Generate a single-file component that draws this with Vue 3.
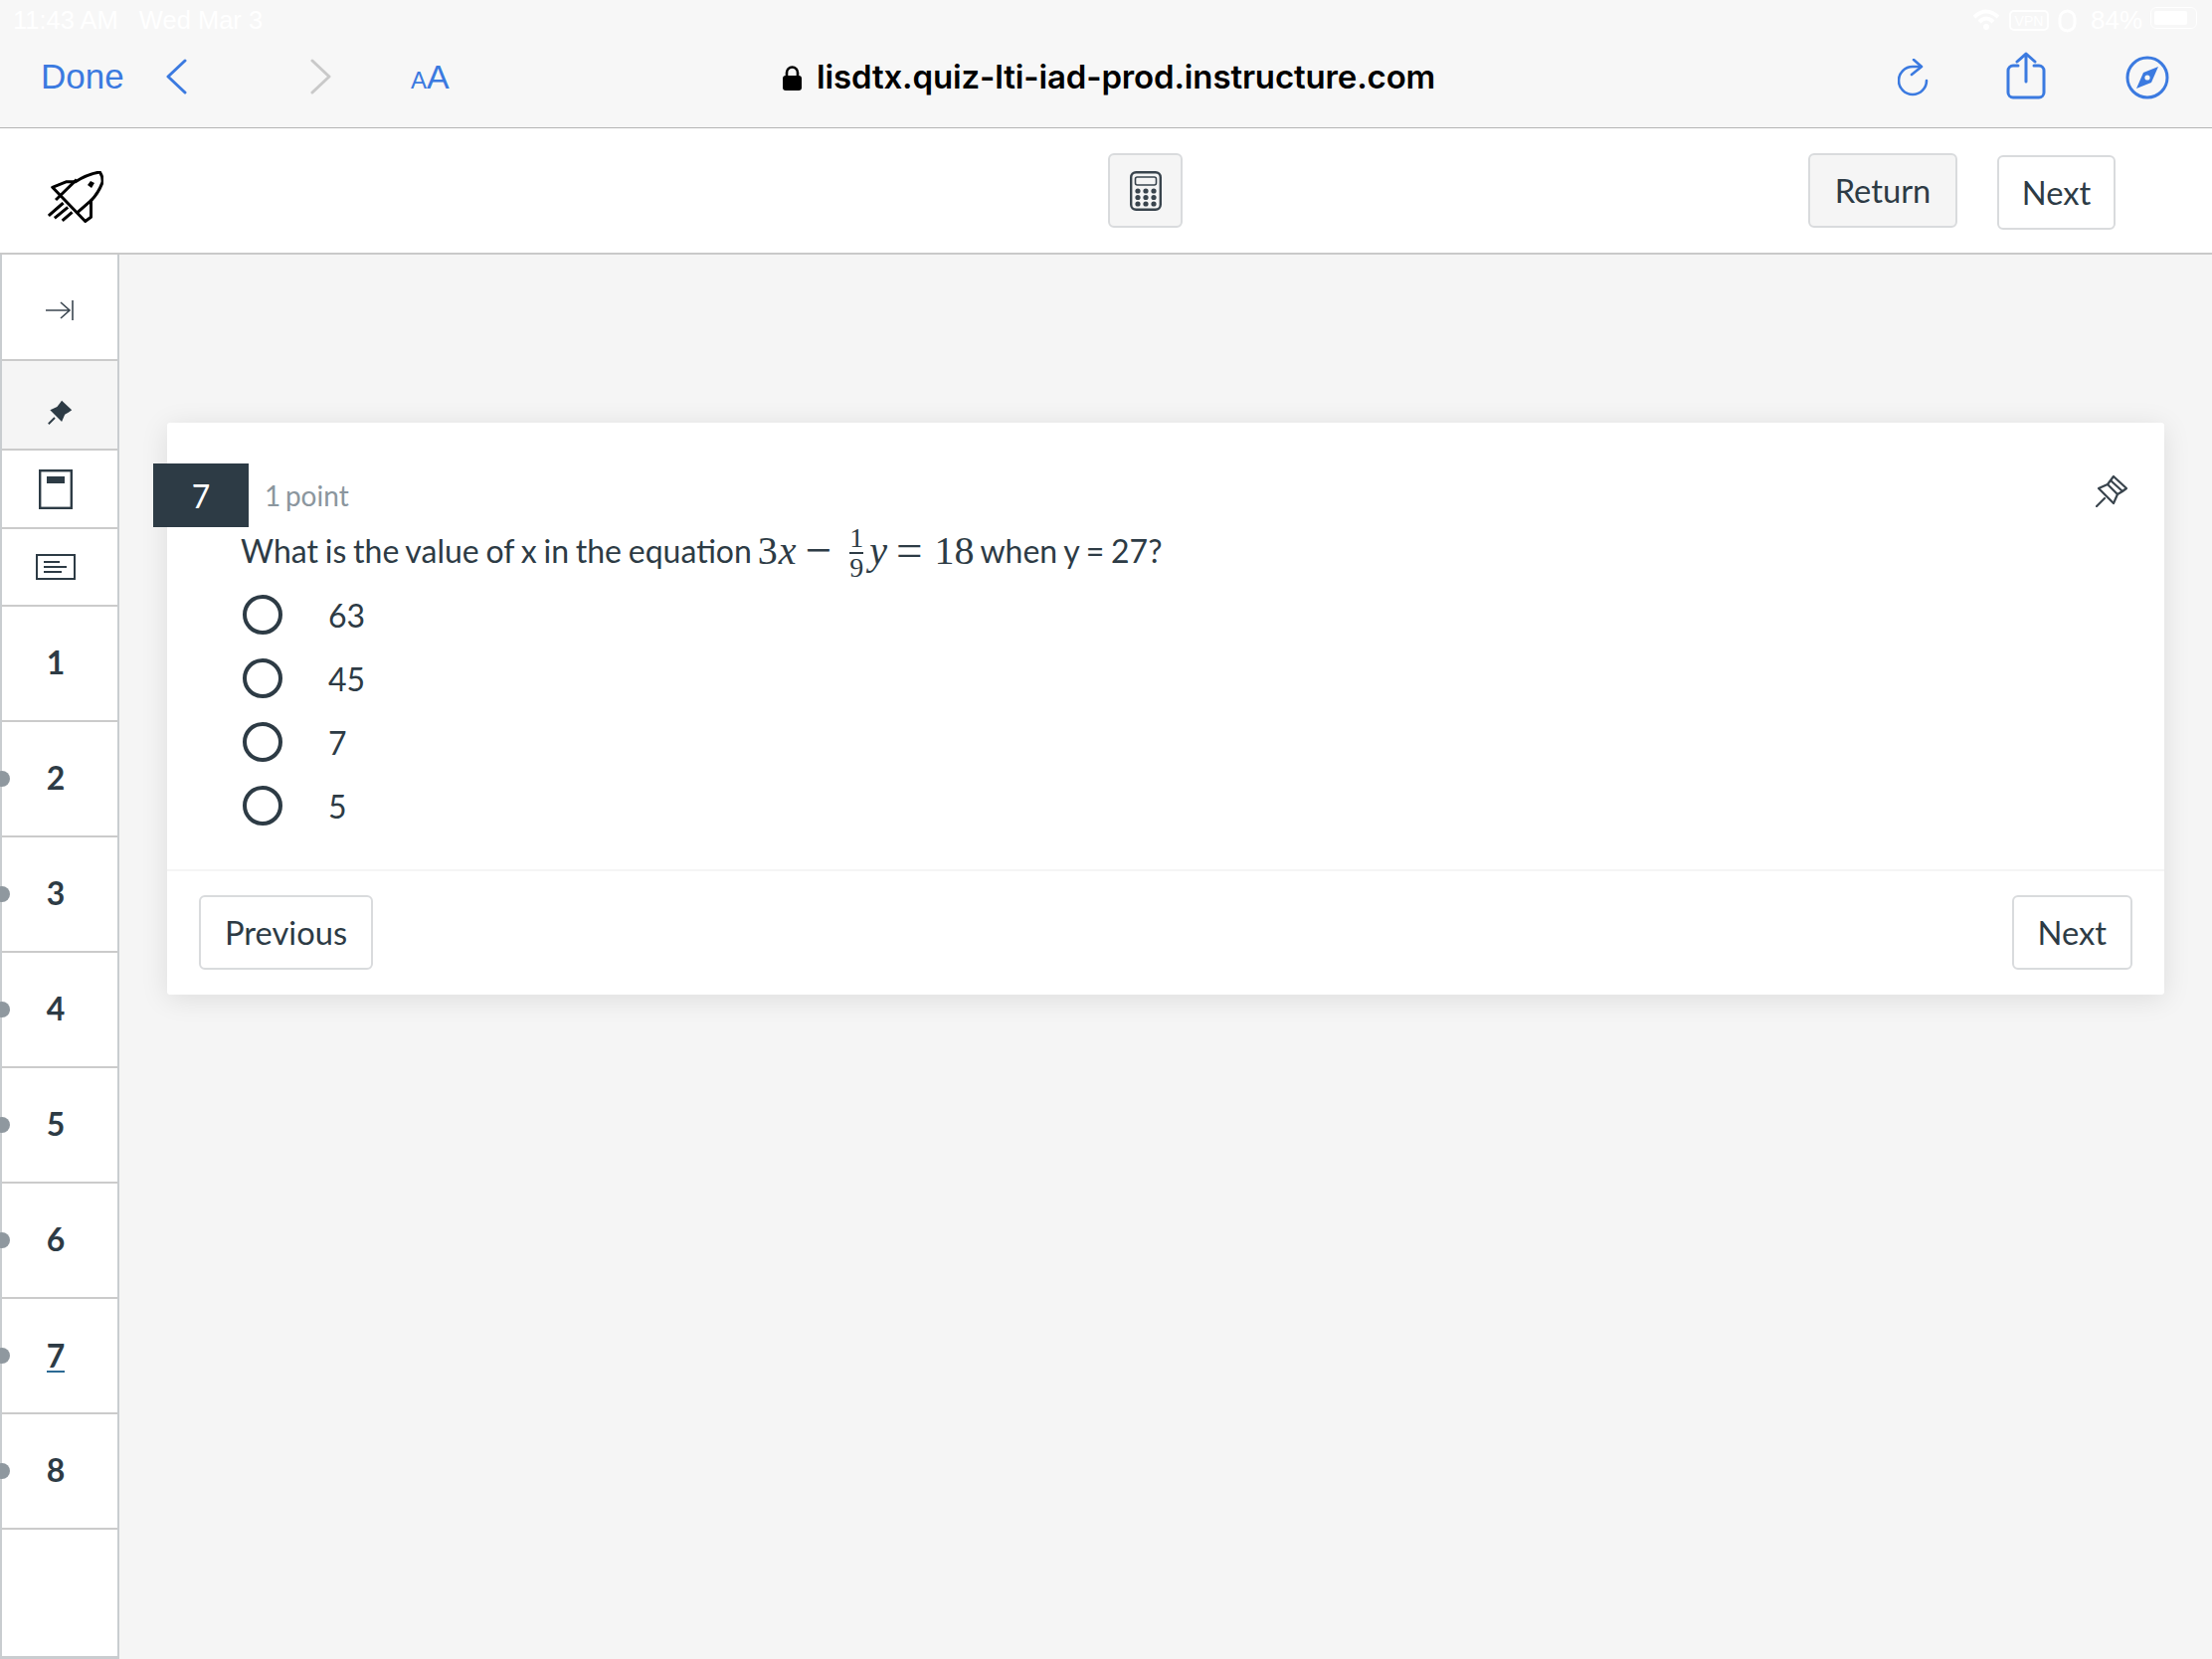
<script setup>
const questions = [1, 2, 3, 4, 5, 6, 7, 8]
const answers = ['63', '45', '7', '5']
const pinPath = 'M18 1 L31 13 L27 16 L22 19 L18 28 L3 13 L12 9 L15 5 Z'
</script>

<template>
  <div class="page">
    <header class="browser">
      <div class="status">
        <span class="time">11:43 AM</span>
        <span class="date">Wed Mar 3</span>
        <svg class="status-icons" width="224" height="24" viewBox="0 0 224 24" fill="none" stroke="#fff">
          <path d="M1 8 Q13 -3 25 8M6 13 Q13 6 20 13" stroke-width="4" />
          <circle cx="13" cy="18" r="3" fill="#fff" stroke="none" />
          <rect x="37" y="2" width="38" height="19" rx="4" stroke-width="2" />
          <text x="56" y="17" text-anchor="middle" font-size="14" fill="#fff" stroke="none">VPN</text>
          <rect x="87" y="2" width="15" height="20" rx="7.5" stroke-width="3" />
        </svg>
        <span class="battery-text">84%</span>
        <span class="battery"><span class="battery-fill"></span></span>
      </div>
      <div class="nav">
        <span class="done">Done</span>
        <svg class="chev-back" width="22" height="36" viewBox="0 0 22 36" fill="none" stroke="#3b7ae0" stroke-width="3" stroke-linecap="round" stroke-linejoin="round"><path d="M20 2 L3 18 L20 34" /></svg>
        <svg class="chev-forward" width="22" height="36" viewBox="0 0 22 36" fill="none" stroke="#c9c9c9" stroke-width="3" stroke-linecap="round" stroke-linejoin="round"><path d="M2 2 L19 18 L2 34" /></svg>
        <span class="aa"><small>A</small>A</span>
        <svg class="lock" width="19" height="25" viewBox="0 0 19 25"><path d="M4 11 V7 a5.5 5.5 0 0 1 11 0 V11" fill="none" stroke="#000" stroke-width="2.6" /><rect y="10" width="19" height="15" rx="3" fill="#000" /></svg>
        <span class="url">lisdtx.quiz-lti-iad-prod.instructure.com</span>
        <svg class="reload" width="32" height="38" viewBox="0 0 32 38" fill="none" stroke="#3b7ae0" stroke-width="2.6" stroke-linecap="round" stroke-linejoin="round"><path d="M16 1 L24 8 L14 16" /><path d="M23 8 H15 A14 14 0 1 0 29 22" /></svg>
        <svg class="share" width="40" height="48" viewBox="0 0 40 48" fill="none" stroke="#3b7ae0" stroke-width="3" stroke-linecap="round" stroke-linejoin="round"><path d="M12 14 H7 A5 5 0 0 0 2 19 V41 A5 5 0 0 0 7 46 H33 A5 5 0 0 0 38 41 V19 A5 5 0 0 0 33 14 H28" /><path d="M20 30 V2 M11 10 L20 2 L29 10" /></svg>
        <svg class="compass" width="44" height="44" viewBox="0 0 44 44"><circle cx="22" cy="22" r="20" fill="none" stroke="#3b7ae0" stroke-width="3" /><path d="M33 11 L26 27 L11 33 L18 17 Z" fill="#3b7ae0" /><circle cx="22" cy="22" r="2.6" fill="#f7f7f7" /></svg>
      </div>
    </header>

    <div class="toolbar">
      <svg class="rocket" width="56" height="52" viewBox="0 0 56 52" fill="none" stroke="#000" stroke-width="3" stroke-linejoin="round" stroke-linecap="square">
        <path d="M52.4 1 Q55.6 6 55 11.3 Q51 22 43.5 29.7 V46.3 L37.7 50.5 L4.7 16.3 L19 10.7 H27.9 Q40 3 52.4 1 Z" />
        <path d="M27.9 9.7 L9.1 28 M43.5 29.7 L30.1 41.3" />
        <path d="M2 44 L14.5 33 M8 46.3 L19 37.3 M15.8 49 L23.4 42.3" />
        <path d="M43 10 L47 12 L44 17 L40 14 Z" fill="#000" stroke="none" />
      </svg>
      <button class="btn calc" type="button">
        <svg width="32" height="40" viewBox="0 0 32 40">
          <rect x="1.2" y="1.2" width="29.6" height="37.6" rx="5" fill="none" stroke="#39444d" stroke-width="2.4" />
          <rect x="5.5" y="6" width="21" height="8" rx="2" fill="none" stroke="#39444d" stroke-width="1.6" />
          <g fill="#39444d">
            <circle v-for="c in [[8,20],[16,20],[24,20],[8,26.5],[16,26.5],[24,26.5],[8,33],[16,33],[24,33]]" :key="c.join()" :cx="c[0]" :cy="c[1]" r="2.6" />
          </g>
        </svg>
      </button>
      <button class="btn return" type="button">Return</button>
      <button class="btn next-top" type="button">Next</button>
    </div>

    <div class="body">
      <nav class="sidebar">
        <div class="side-row row-arrow">
          <svg width="28" height="20" viewBox="0 0 28 20" fill="none" stroke="#3b4650" stroke-width="1.6"><path d="M0 10 H24 M15 2 L24 10 L15 18 M27 0 V20" /></svg>
        </div>
        <div class="side-row row-pin">
          <svg width="25" height="25" viewBox="0 0 32 32"><path :d="pinPath" fill="#2d3b45" /><path d="M1 31 L9 23" stroke="#2d3b45" stroke-width="2.4" /></svg>
        </div>
        <div class="side-row row-doc">
          <svg width="34" height="40" viewBox="0 0 34 40" fill="none"><rect x="1.2" y="1.2" width="31.6" height="37.6" stroke="#2d3b45" stroke-width="2.4" /><rect x="8" y="7" width="18" height="7" fill="#2d3b45" /></svg>
        </div>
        <div class="side-row row-notes">
          <svg width="40" height="26" viewBox="0 0 40 26" fill="none" stroke="#2d3b45"><rect x="1" y="1" width="38" height="24" stroke-width="2" /><path d="M8 8 H24 M8 13 H31 M8 18 H26" stroke-width="1.8" /></svg>
        </div>
        <a v-for="q in questions" :key="q" class="side-row num" :class="{ current: q === 7 }">
          <span v-if="q > 1" class="dot"></span>
          <span class="num-text">{{ q }}</span>
        </a>
      </nav>

      <main class="main">
        <section class="card">
          <span class="tag">7</span>
          <div class="head">
            <span class="points">1 point</span>
            <svg class="pin" width="32" height="32" viewBox="0 0 32 32" fill="none" stroke="#39444d" stroke-width="2.2" stroke-linejoin="round"><path :d="pinPath" /><path d="M15 5 L27 16 M12 9 L22 19" /><path d="M1 31 L9 23" stroke-linecap="round" /></svg>
          </div>
          <p class="question">
            <span>What is the value of x in the equation</span>
            <span class="math">
              <span>3</span><i class="mx">x</i>
              <span class="op op-minus">−</span>
              <span class="frac"><span>1</span><span class="frac-bottom">9</span></span>
              <i class="my">y</i>
              <span class="op op-eq">=</span>
              <span class="eighteen">18</span>
            </span>
            <span>when y = 27?</span>
          </p>
          <ul class="answers">
            <li v-for="a in answers" :key="a" class="answer">
              <span class="radio"></span>
              <span>{{ a }}</span>
            </li>
          </ul>
          <footer class="foot">
            <button class="btn nav-btn" type="button">Previous</button>
            <button class="btn nav-btn" type="button">Next</button>
          </footer>
        </section>
      </main>
    </div>
  </div>
</template>

<style>
html, body { margin: 0; background: #f5f5f5; }
</style>

<style scoped>
.page { width: 2224px; height: 1668px; overflow: hidden; display: flex; flex-direction: column; background: #f5f5f5; font-family: Lato, "Open Sans", sans-serif; color: #2d3b45; }

.browser { height: 129px; box-sizing: border-box; background: #f7f7f7; border-bottom: 1.5px solid #b4b4b4; flex: none; font-family: "Liberation Sans", Arial, sans-serif; }
.status { height: 40px; box-sizing: border-box; padding: 7px 15px 0 13px; display: flex; align-items: flex-start; color: #fff; font-size: 25.5px; line-height: 27px; }
.date { margin-left: 21px; }
.status-icons { margin-left: auto; margin-top: 2px; transform: translateX(4px); }
.battery-text { margin-left: -102px; width: 60px; font-size: 26px; }
.battery { width: 47px; height: 22px; box-sizing: border-box; border: 1px solid #fff; border-radius: 6px; padding: 3px; margin-left: 0; }
.battery-fill { display: block; width: 33px; height: 14px; background: #fff; border-radius: 2px; }

.nav { display: flex; align-items: center; height: 74px; padding-left: 41px; }
.done { font-size: 35px; color: #3b7ae0; width: 125px; line-height: 40px; }
.chev-forward { margin-left: 124px; }
.aa { margin-left: 79px; margin-top: 3px; color: #3b7ae0; font-size: 34px; line-height: 40px; width: 39px; white-space: nowrap; }
.aa small { font-size: 24px; }
.lock { margin-left: 335px; margin-top: 2px; }
.url { margin-left: 15px; width: 622px; font-size: 33px; font-family: Inter, "Liberation Sans", sans-serif; font-weight: 600; color: #000; white-space: nowrap; letter-spacing: -0.14px; line-height: 40px; }
.reload { margin-left: 465px; margin-top: 2px; }
.share { margin-left: 77px; margin-top: -2px; }
.compass { margin-left: 80px; margin-top: 1px; }

.toolbar { height: 127px; box-sizing: border-box; background: #fff; border-bottom: 2px solid #c9c9c9; flex: none; display: flex; align-items: flex-start; padding: 25px 97px 0 48px; }
.rocket { margin-top: 18px; }
.btn { box-sizing: border-box; height: 75px; font-family: Lato, "Open Sans", sans-serif; font-size: 32.7px; color: #2d3b45; background: #fff; border: 2px solid #d9dbdd; border-radius: 6px; padding: 0 24px; }
.calc { width: 75px; margin-left: 1010px; background: #f5f5f5; padding: 0; display: flex; align-items: center; justify-content: center; }
.return { margin-left: auto; width: 150px; padding: 0; background: #f5f5f5; }
.next-top { margin-left: 40px; width: 119px; padding: 0; margin-top: 2px; }

.body { flex: 1; display: flex; min-height: 0; }
.sidebar { width: 120px; box-sizing: border-box; flex: none; background: #fff; border-left: 2px solid #c9cdd0; border-right: 2px solid #c9cdd0; border-bottom: 3px solid #c9cdd0; }
.side-row { position: relative; box-sizing: border-box; display: flex; align-items: center; justify-content: center; border-bottom: 2px solid #cbcbcb; }
.row-arrow { height: 107px; align-items: flex-start; }
.row-arrow svg { margin-top: 46px; }
.row-pin { height: 90px; background: #f5f5f5; align-items: flex-end; padding-bottom: 24px; }
.row-doc { height: 79px; padding-right: 8px; }
.row-notes { height: 78px; padding-right: 8px; }
.num { height: 116px; padding-right: 8px; font-size: 32px; font-weight: 700; }
.num-text { line-height: 38px; margin-top: -2px; }
.current .num-text { border-bottom: 2px solid #2b6a94; line-height: 30px; padding-top: 4px; }
.dot { position: absolute; left: -8px; top: 50%; margin-top: -8px; width: 16px; height: 16px; border-radius: 50%; background: #8f989f; }

.main { flex: 1; padding: 169px 48px 0; min-width: 0; }
.card { position: relative; background: #fff; border-radius: 3px; box-shadow: 0 4px 28px rgba(0, 0, 0, 0.1); height: 575px; box-sizing: border-box; padding-top: 41px; display: flex; flex-direction: column; }
.tag { position: absolute; left: -14px; top: 41px; width: 96px; height: 64px; background: #2d3b45; color: #fff; font-size: 32px; display: flex; align-items: center; justify-content: center; }
.head { height: 64px; flex: none; display: flex; align-items: center; padding: 0 37px 0 98px; }
.points { font-size: 28px; color: #8b969e; word-spacing: -2.5px; }
.pin { margin-left: auto; margin-top: -9px; }
.question { height: 47px; margin: 0; padding: 0 0 9px 74px; display: flex; align-items: center; font-size: 32px; white-space: nowrap; word-spacing: -1.4px; }
.math { display: inline-flex; align-items: center; font-family: "Liberation Serif", "Times New Roman", serif; font-size: 40px; line-height: 45px; margin: 0 6px 0 6px; }
.mx { margin-left: 1px; }
.op { font-size: 47px; }
.op-minus { margin-left: 9px; }
.frac { display: inline-flex; flex-direction: column; align-items: center; width: 14px; margin-left: 18px; font-size: 28px; line-height: 28px; margin-top: 5px; }
.frac-bottom { border-top: 2px solid #2d3b45; width: 100%; text-align: center; }
.my { margin-left: 6px; }
.op-eq { margin-left: 9px; }
.eighteen { margin-left: 12px; }
.answers { list-style: none; margin: 0; padding: 0 0 32px 76px; }
.answer { height: 64px; display: flex; align-items: center; font-size: 32px; }
.radio { width: 40px; height: 40px; box-sizing: border-box; border: 4px solid #2d3b45; border-radius: 50%; margin-right: 46px; }
.foot { flex: 1; display: flex; justify-content: space-between; align-items: flex-start; border-top: 2px solid #f5f5f5; padding: 24px 32px 0; }
.nav-btn { padding: 0 24px; }
</style>
